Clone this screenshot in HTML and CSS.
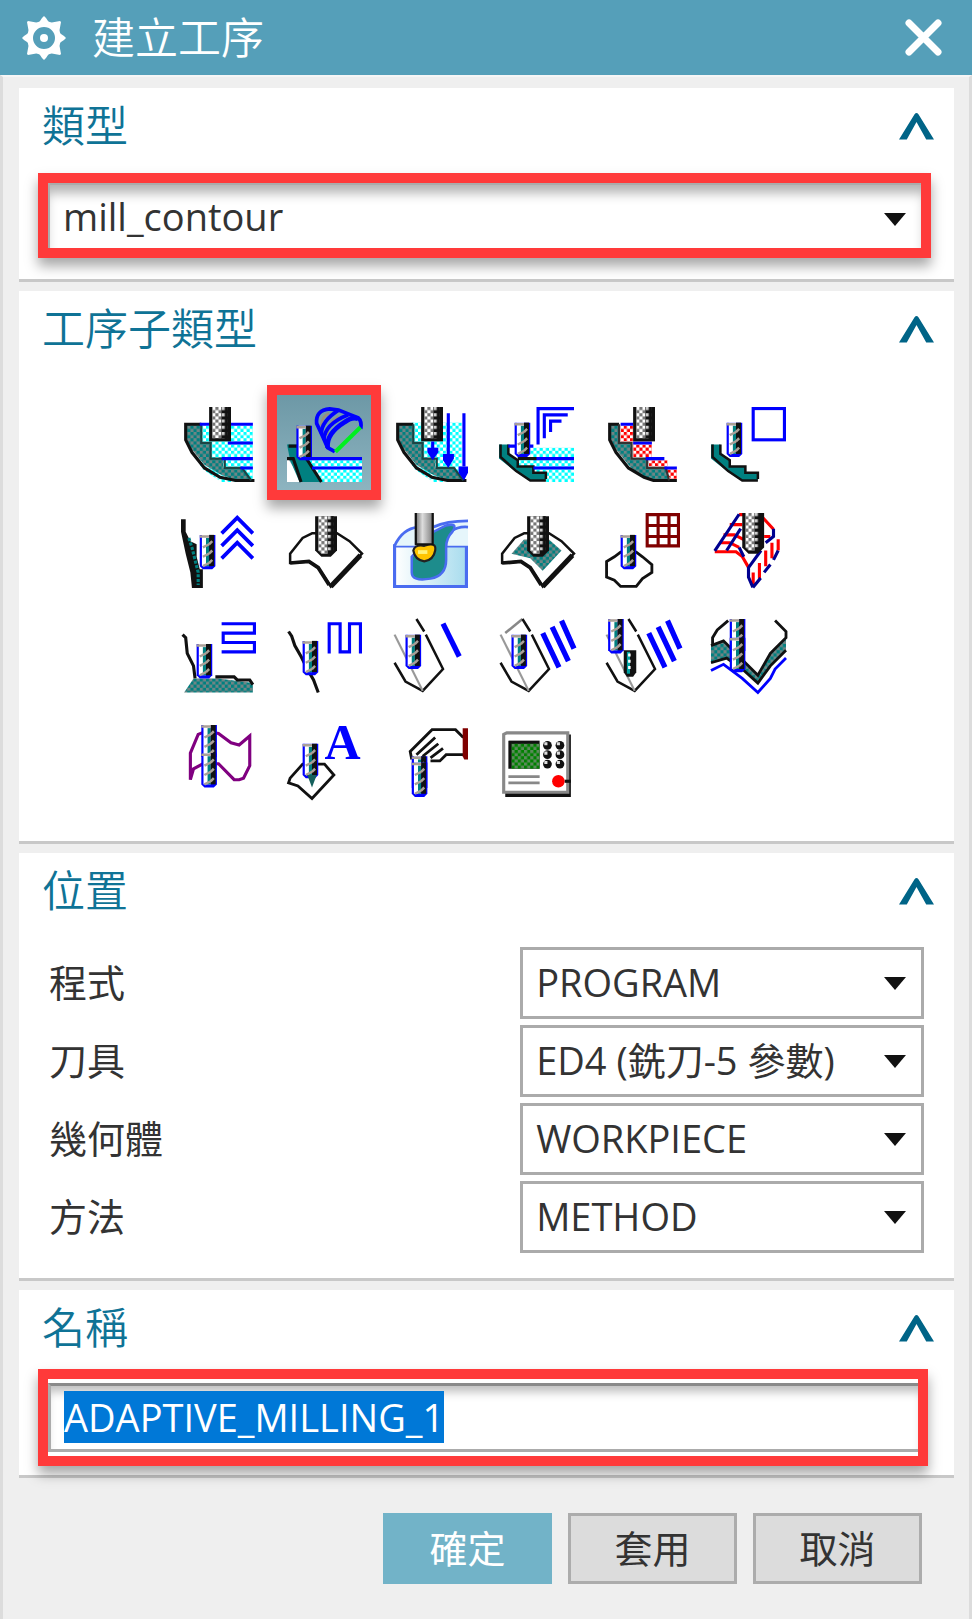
FILE: index.html
```
<!DOCTYPE html>
<html lang="zh-Hant">

<head>
    <meta charset="UTF-8">
    <meta name="viewport" content="width=device-width, initial-scale=1.0">
    <title>建立工序</title>
    <link rel="stylesheet" href="styles.css">
</head>

<body>
    <!-- shared patterns and cutters -->
    <svg class="defs" width="0" height="0" aria-hidden="true">
        <defs>
            <pattern id="teal" width="2" height="2" patternUnits="userSpaceOnUse">
                <rect width="2" height="2" fill="#008080" />
                <path d="M0 0h1v1h1v1h-1v-1h-1z" fill="#6f8585" />
            </pattern>
            <pattern id="cyan" width="2" height="2" patternUnits="userSpaceOnUse">
                <rect width="2" height="2" fill="#fff" />
                <path d="M0 0h1v1h1v1h-1v-1h-1z" fill="#00ffff" />
            </pattern>
            <pattern id="red" width="2" height="2" patternUnits="userSpaceOnUse">
                <rect width="2" height="2" fill="#fff" />
                <path d="M0 0h1v1h1v1h-1v-1h-1z" fill="#ff0000" />
            </pattern>
            <pattern id="green" width="2" height="2" patternUnits="userSpaceOnUse">
                <rect width="2" height="2" fill="#008000" />
                <path d="M0 0h1v1h1v1h-1v-1h-1z" fill="#5c8a5c" />
            </pattern>
            <pattern id="steel" width="2" height="2" patternUnits="userSpaceOnUse">
                <rect width="2" height="2" fill="#fff" />
                <path d="M0 0h1v1h1v1h-1v-1h-1z" fill="#777" />
            </pattern>
            <pattern id="dark" width="2" height="2" patternUnits="userSpaceOnUse">
                <rect width="2" height="2" fill="#111" />
                <path d="M0 0h1v1h-1z" fill="#ccc" />
            </pattern>
            <linearGradient id="shank">
                <stop offset="0" stop-color="#666" />
                <stop offset="0.4" stop-color="#ddd" />
                <stop offset="1" stop-color="#777" />
            </linearGradient>
            <linearGradient id="block">
                <stop offset="0" stop-color="#fff" />
                <stop offset="1" stop-color="#a8dcee" />
            </linearGradient>
            <g id="mill">
                <rect width="7" height="11" fill="#111" />
                <rect x="1" width="3" height="10" fill="url(#steel)" />
                <rect x="4" width="2" height="10" fill="url(#dark)" />
            </g>
            <g id="ball">
                <path d="M0 0h7v11l-2 2h-3l-2-2z" fill="#111" />
                <path d="M1 0h3v12h-2l-1-1z" fill="url(#steel)" />
                <rect x="4" width="2" height="11" fill="url(#dark)" />
            </g>
            <g id="cutter">
                <path d="M0 0h5v10l-1 1h-3l-1-1z" fill="#0000ff" />
                <rect x="0.700" width="2.300" height="10" fill="#fff" />
                <rect x="2" y="1" width="1" height="9" fill="#008080" />
                <rect x="3" y="0" width="1.600" height="10" fill="#111" />
                <path d="M0 .5h3M1 4l2-1M1 7l2-1M1 10l2-1M3 3l1-1M3 6l1-1M3 9l1-1" stroke="#aaa098" stroke-width="0.8" />
            </g>
            <g id="bowl">
                <path d="M1.500 5.500h5v6h3v5h4v3h6l3 4h-5l-5-2l-5-3l-4-5l-2-4z" fill="url(#teal)" />
                <path d="M6.500 5.500h-5v5l2 4l4 5l5 3l5 1h6" fill="none" stroke="#111" />
                <path d="M6.500 5.500v6h3v5h4.500v3h5.500l3 4" fill="none" stroke="#1c4444" stroke-width="0.7" />
            </g>
            <g id="sheet">
                <path d="M8 6.500L5 8L1 13v3l6-.5l3 2l4 6L24 13l-4-4l-4-2.500z" fill="#fff" stroke="#111" stroke-width="0.800" />
                <path d="M1 16l6-.500l3 2l3.500 5.500" fill="none" stroke="#111" stroke-width="1.200" />
                <path d="M14 23.500l9.500-10" stroke="#111" stroke-width="1.600" />
            </g>
            <g id="facet">
                <path d="M7.500 0L10 4M10.500 5L16 16L9.500 23L4 20L.5 14" fill="none" stroke="#111" stroke-width="0.800" />
                <path d="M.5 5l9 18" stroke="#999" stroke-width="0.700" />
            </g>
            <g id="corner">
                <path d="M0 12h3v3l3 2v2h5v2h4v2.500h-5l-5-3l-5-4z" fill="#008080" />
                <path d="M.5 12v4l5 4.500l4.500 3h5M3 12v3l3 2v2h5v2h4v2" fill="none" stroke="#111" stroke-width="0.800" />
            </g>
        </defs>
    </svg>

    <header class="titlebar">
        <svg class="gear" viewBox="0 0 44 44" aria-hidden="true">
            <g fill="#fff">
                <path d="M16 8l4-6l2-2l2 2l4 6zM16 36l4 6l2 2l2-2l4-6zM8 16l-6 4l-2 2l2 2l6 4zM36 16l6 4l2 2l-2 2l-6 4z" />
                <path d="M17 7l-11-2l-1 1l2 11zM27 7l11-2l1 1l-2 11zM17 37l-11 2l-1-1l2-11zM27 37l11 2l1-1l-2-11z" />
            </g>
            <circle cx="22" cy="22" r="14" fill="#559fb9" stroke="#fff" stroke-width="6" />
            <circle cx="22" cy="22" r="4" fill="#fff" />
        </svg>
        <h1>建立工序</h1>
        <button class="close" aria-label="關閉">
            <svg viewBox="0 0 37 37"><path d="M4 4L33 33M33 4L4 33" stroke="#fff" stroke-width="7" stroke-linecap="round" /></svg>
        </button>
    </header>

    <main>
        <section class="panel">
            <div class="panel-head">
                <h2><label for="type">類型</label></h2>
                <button class="fold" aria-label="收合類型"><svg viewBox="0 0 36 28"><path d="M0 28L16 2q2-3 4 0L36 28h-8L18 10L8 28z" /></svg></button>
            </div>
            <div class="marked type-box">
                <select id="type">
                    <option>mill_contour</option>
                </select>
            </div>
        </section>

        <section class="panel">
            <div class="panel-head">
                <h2>工序子類型</h2>
                <button class="fold" aria-label="收合工序子類型"><svg viewBox="0 0 36 28"><path d="M0 28L16 2q2-3 4 0L36 28h-8L18 10L8 28z" /></svg></button>
            </div>
            <div class="subtypes">
                <button aria-label="型腔銑">
                    <svg viewBox="0 0 24 24">
                        <rect x="6" y="6" width="17" height="18" fill="url(#cyan)" />
                        <path d="M1 11l6 9l6 4H1z" fill="#fff" />
                        <use href="#bowl" />
                        <path d="M6 5.500h17M15 11.500h8M13 16.500h10M19 19.500h4" stroke="#0000ff" />
                        <use href="#mill" x="9" y="0" />
                    </svg>
                </button>
                <button class="selected" aria-label="自適應銑削">
                    <svg viewBox="0 0 24 24">
                        <path d="M6 16h18v8H11z" fill="url(#cyan)" />
                        <path d="M0 16v8h5z" fill="#fff" />
                        <path d="M0 12h4l7 12H4L1 17z" fill="#008080" />
                        <path d="M.5 12.500h3M0 16.500h2l2.500 7.500M4 13l7 11" fill="none" stroke="#111" />
                        <path d="M6 16.500h18M8 19.500h16" stroke="#0000ff" />
                        <path d="M13.500 2Q11 3 11 6M16.500 3Q13 5 12.800 9" fill="none" stroke="#988e80" stroke-width="0.800" />
                        <g fill="none" stroke="#0000ff" stroke-width="1.200">
                            <path d="M15.300 14.300L13 13L11 8.500L9.500 5.300Q9 1 13.700 .6L16.500 1L19.600 2.200L22.800 3.500Q24 4.500 23.600 7" />
                            <path d="M11 8.500Q11 4.500 16.500 1" />
                            <path d="M11.800 10.500Q12 5.500 19.600 2.500" />
                            <path d="M13 13Q12.500 8.500 18.500 4.800Q21 3 22.800 3.800" stroke-width="1.500" />
                        </g>
                        <path d="M15.500 14.300L23.500 6.500" stroke="#00f020" stroke-width="1.300" />
                        <use href="#cutter" x="3" y="6" />
                    </svg>
                </button>
                <button aria-label="插銑">
                    <svg viewBox="0 0 24 24">
                        <rect x="6" y="5" width="16" height="19" fill="url(#cyan)" />
                        <path d="M1 11l6 9l6 4H1z" fill="#fff" />
                        <use href="#bowl" />
                        <use href="#mill" x="9" y="0" />
                        <path d="M12.700 11v3M17.700 2v14M22.700 2v17" stroke="#0000ff" />
                        <path d="M11 13h3.500v1.500L12.700 17L11 14.500zM16 15h3.500v1.500L17.700 19.500L16 17zM21 19h3v2l-1.300 2.500L21 21z" fill="#0000ff" />
                    </svg>
                </button>
                <button aria-label="拐角粗加工">
                    <svg viewBox="0 0 24 24">
                        <path d="M10 13h14v11h-9v-3h-4v-2H6v-3h4z" fill="url(#cyan)" />
                        <use href="#corner" />
                        <path d="M12.500 12V.5H24M14.500 10V2.500H22M16.500 8V4.500h3.500M11 16.500h13M11 19.500h13M3 12.500h8" fill="none" stroke="#0000ff" />
                        <use href="#cutter" x="5" y="5" />
                        <path d="M6 16.500h6" stroke="#111" />
                    </svg>
                </button>
                <button aria-label="剩餘銑">
                    <svg viewBox="0 0 24 24">
                        <path d="M5 6h4v5H5zM9 12h6v4H9zM14 17h6v2h-6zM19 20h4v3h-2z" fill="url(#red)" />
                        <path d="M1.500 5.500h3v6h4v5h5v3h6l1 4h-5l-5-2l-3-3l-4-5l-2-4z" fill="url(#teal)" />
                        <path d="M4.500 5.500h-3v5l2 4l4 5l5 3l3 1h7.500" fill="none" stroke="#111" />
                        <path d="M4.500 5.500v6h4v5h5v3h6l1 4" fill="none" stroke="#333" stroke-width="0.700" />
                        <path d="M5 5.500h4M9 11.500h6M13 16.500h6M19 19.500h4" stroke="#0000ff" />
                        <use href="#mill" x="9" y="0" />
                    </svg>
                </button>
                <button aria-label="深度輪廓銑">
                    <svg viewBox="0 0 24 24">
                        <use href="#corner" />
                        <rect x="13.500" y="0.500" width="10" height="10" fill="#fff" stroke="#0000ff" />
                        <use href="#cutter" x="5" y="5" />
                    </svg>
                </button>

                <button aria-label="陡峭深度銑">
                    <svg viewBox="0 0 24 24">
                        <path d="M0 2h1.500v4L3 9l2 1v4l1 4h1v6H3.500L3 19l-1.500-6L0 6z" fill="#111" />
                        <path d="M2.500 8l1 3l1 4l1 4v4" fill="none" stroke="#008080" stroke-dasharray="1 0.500" />
                        <path d="M13 6.500l5-5l5 5M13 10.500l5-5l5 5M13 14.500l5-5l5 5" fill="none" stroke="#0000ff" stroke-width="1.200" />
                        <use href="#cutter" x="6" y="7" />
                    </svg>
                </button>
                <button aria-label="固定輪廓銑">
                    <svg viewBox="0 0 24 24">
                        <use href="#sheet" />
                        <use href="#ball" x="9" y="1" />
                    </svg>
                </button>
                <button aria-label="區域輪廓銑">
                    <svg viewBox="0 0 24 24">
                        <path d="M.5 10.500h23v13H.5z" fill="url(#block)" stroke="#4a6cf0" />
                        <path d="M.5 10.500Q3 5 8 4.500L16 3h8v7.500z" fill="#e6f6fb" />
                        <path d="M.5 10.500Q3 5 8 4.500M13 4.500Q17 2.500 24 2.500M16 10Q18 4 24 4.500" fill="none" stroke="#4a6cf0" stroke-width="0.900" />
                        <path d="M13 6l4-2q4-1 2 2q-2 2-2 5v4q0 5-5 6q-6 1-6-2v-5z" fill="#1d8c8c" stroke="#4a6cf0" stroke-width="0.800" />
                        <path d="M6.500 12Q7 10 10 10.500Q14 9 13.500 12Q13 15 10 15.500Q7 15 6.500 12z" fill="#ffc400" stroke="#222" stroke-width="0.700" />
                        <path d="M8 12.500h3" stroke="#fff27a" stroke-width="1.200" />
                        <path d="M7 0h6v10H7z" fill="url(#shank)" />
                        <path d="M7.300 0v10h5.400V0" fill="none" stroke="#111" stroke-width="0.700" />
                    </svg>
                </button>
                <button aria-label="曲面區域銑">
                    <svg viewBox="0 0 24 24">
                        <use href="#sheet" />
                        <path d="M4 13l4-4.500h8l4 3.500l-6 6.500l-4-4z" fill="url(#teal)" />
                        <use href="#ball" x="9" y="1" />
                    </svg>
                </button>
                <button aria-label="流線">
                    <svg viewBox="0 0 24 24">
                        <path d="M5 12.500l-2 1.500l-2.500 1.500v5L3 21.500L5 23.500h5l2-2.500l3-2v-2.500L12 14l-2-1.500z" fill="#fff" stroke="#111" stroke-width="0.900" />
                        <path d="M13.500.5h10v10h-10zM17 .5v10M20.500.5v10M13.500 4h10M13.500 7.500h10" fill="none" stroke="#800000" />
                        <use href="#cutter" x="5" y="7" />
                    </svg>
                </button>
                <button aria-label="流線驅動">
                    <svg viewBox="0 0 24 24">
                        <g fill="none" stroke="#ff0000">
                            <path d="M9 .5h2M6 3.700h4M4 7h3.500l3 1.500M3 9.500h3l3 1.500M1.200 12.400H8l2 1.500l2 3.500" />
                            <path d="M16.600 1.500L20 5.200M17 7.500h2M21.500 8.400V12M19.500 9.500v5M17.500 12v5M15.500 16v5M13.500 19v4" />
                        </g>
                        <g fill="none" stroke="#000090">
                            <path d="M9 .4L1.200 12.100M9.500 5L5 12M9 11l1.500 3" />
                            <path d="M13.400 23.800l2.500-3M17 19l2-2.500M20 15l1.500-3M20 5v2.500l-2.500 2M16 12l-4 5.500v3l1.400 3.300" />
                        </g>
                        <use href="#ball" x="10" y="0" />
                    </svg>
                </button>

                <button aria-label="非陡峭區域銑">
                    <svg viewBox="0 0 24 24">
                        <path d="M1 23.500L4 19h8l11 1.500v3z" fill="url(#teal)" />
                        <path d="M.5 5l1 1l.5 5l2 4l.5 4M11 18.500h6l1 1h4l1 1.500" fill="none" stroke="#111" />
                        <path d="M13 1.500h10.500v3h-10v3h10v3H13" fill="none" stroke="#0000ff" />
                        <use href="#cutter" x="5" y="8" />
                    </svg>
                </button>
                <button aria-label="陡峭區域銑">
                    <svg viewBox="0 0 24 24">
                        <path d="M.5 4l1 1.500l1 3l2 3.500l2 4l2 3.500l1.500 4" fill="none" stroke="#111" />
                        <path d="M13.500 11V1.500H17v9h3v-9h3.500V11" fill="none" stroke="#0000ff" />
                        <use href="#cutter" x="5" y="7" />
                    </svg>
                </button>
                <button aria-label="單刀路清根">
                    <svg viewBox="0 0 24 24">
                        <use href="#facet" />
                        <path d="M16 1.500l5.200 10.500" stroke="#0000ff" stroke-width="1.700" />
                        <use href="#cutter" x="4" y="5" />
                    </svg>
                </button>
                <button aria-label="多刀路清根">
                    <svg viewBox="0 0 24 24">
                        <path d="M7.500 0L2 4.500" stroke="#888" stroke-width="0.800" />
                        <use href="#facet" />
                        <path d="M14 4.500l5.200 11M17 2.500l5.200 11M20 .5L24 9.500" stroke="#0000ff" stroke-width="1.700" />
                        <use href="#cutter" x="4" y="5" />
                    </svg>
                </button>
                <button aria-label="清根參考刀具">
                    <svg viewBox="0 0 24 24">
                        <use href="#facet" />
                        <path d="M14 4.500l5.200 11M17 2.500l5.200 11M20 .5L24 9.500" stroke="#0000ff" stroke-width="1.700" />
                        <use href="#cutter" x="1" y="0" />
                        <path d="M6 10h4v7l-1 1.500H7L6 17z" fill="#111" />
                        <path d="M7.500 10.500v7" stroke="#00a0a0" />
                        <path d="M7.800 11v6" stroke="#fff" stroke-width="0.800" stroke-dasharray="1 1" />
                    </svg>
                </button>
                <button aria-label="實體輪廓 3D">
                    <svg viewBox="0 0 24 24">
                        <path d="M0 8.500L4 7l6 6l5 5l4-7l5-5v4l-5 5l-4 5.500L10 16l-5-3.500L0 14z" fill="url(#teal)" />
                        <path d="M.5 8V6L2 3.500L5.500.5M0 8.500L4 7l6 6l5 5l4-7l5-5V4L20.500.5M0 14l5-1.500l5 3.500l5 4.500l4-5.500l5-5" fill="none" stroke="#111" stroke-width="0.900" />
                        <path d="M0 16.500l4-2l6 4.500l5 4.500l4-4.500l1.500-3l3.500-3.500" fill="none" stroke="#0000ff" stroke-width="0.900" />
                        <use href="#cutter" x="6" y="0" />
                        <use href="#cutter" x="6" y="6" />
                    </svg>
                </button>

                <button aria-label="輪廓 3D">
                    <svg viewBox="0 0 24 24">
                        <path d="M3 17.500V9l2.500-6L8 2l4 .7l4 3l2.600.7L22 3.500V13l-2 4l-1.400.5H17L12 12.400H7L4 14z" fill="#fff" stroke="#800080" />
                        <use href="#cutter" x="6.500" y="0" />
                        <use href="#cutter" x="6.500" y="9" />
                    </svg>
                </button>
                <button aria-label="輪廓文字">
                    <svg viewBox="0 0 24 24">
                        <path d="M5 12.500L1 17l-.5 1.500l3 1l4.500 4l7-7.500l-3-3.500z" fill="#fff" stroke="#111" stroke-width="0.900" />
                        <text class="glyph-a" x="12" y="11">A</text>
                        <use href="#cutter" x="5" y="6" />
                        <path d="M6.500 16h3l-1.500 4z" fill="#14605c" />
                    </svg>
                </button>
                <button aria-label="使用者定義銑">
                    <svg viewBox="0 0 24 24">
                        <path d="M5.500 10.500v-2L12.500 1.500H20L22.500 4v5H17l-2 2.500h-3.500z" fill="#fff" />
                        <path d="M6 11L5.500 8.500L12.500 1.500H20L22.500 4M22.500 9.500H17l-2 2h-3M7.500 9.500l6-5.500M9.500 10l5-4M12 10.500l4-3" fill="none" stroke="#111" stroke-width="0.900" />
                        <path d="M22.300 1h1.700v10h-1.200l-.5-1z" fill="#800000" />
                        <use href="#cutter" x="6" y="10" />
                        <use href="#cutter" x="6" y="12" />
                    </svg>
                </button>
                <button aria-label="銑削控制">
                    <svg viewBox="0 0 24 24">
                        <path d="M2 3h21v20H2z" fill="#111" />
                        <path d="M1.500 3l1-.5h19.500v19H1.500z" fill="#fff" stroke="#888" />
                        <path d="M3 5h10v9H3z" fill="#111" />
                        <path d="M4 6h9v8H4z" fill="url(#green)" />
                        <path d="M3 16.500h10M3 18.500h10" stroke="#888" stroke-width="0.900" />
                        <g fill="#111">
                            <circle cx="15.500" cy="6.500" r="1.400" />
                            <circle cx="19.500" cy="6.500" r="1.400" />
                            <circle cx="15.500" cy="9.500" r="1.400" />
                            <circle cx="19.500" cy="9.500" r="1.400" />
                            <circle cx="15.500" cy="12.500" r="1.400" />
                            <circle cx="19.500" cy="12.500" r="1.400" />
                        </g>
                        <path d="M14.500 6h1M14.500 9h1M14.500 12h1M18.500 6h1M18.500 9h1M18.500 12h1" stroke="#ddd" />
                        <path d="M21 18h2" stroke="#111" />
                        <circle cx="19" cy="18" r="2" fill="#ff0000" />
                    </svg>
                </button>
            </div>
        </section>

        <section class="panel">
            <div class="panel-head">
                <h2>位置</h2>
                <button class="fold" aria-label="收合位置"><svg viewBox="0 0 36 28"><path d="M0 28L16 2q2-3 4 0L36 28h-8L18 10L8 28z" /></svg></button>
            </div>
            <div class="fields">
                <label for="program">程式</label>
                <select id="program">
                    <option>PROGRAM</option>
                </select>
                <label for="tool">刀具</label>
                <select id="tool">
                    <option>ED4 (銑刀-5 參數)</option>
                </select>
                <label for="geometry">幾何體</label>
                <select id="geometry">
                    <option>WORKPIECE</option>
                </select>
                <label for="method">方法</label>
                <select id="method">
                    <option>METHOD</option>
                </select>
            </div>
        </section>

        <section class="panel">
            <div class="panel-head">
                <h2><label for="name">名稱</label></h2>
                <button class="fold" aria-label="收合名稱"><svg viewBox="0 0 36 28"><path d="M0 28L16 2q2-3 4 0L36 28h-8L18 10L8 28z" /></svg></button>
            </div>
            <div class="marked name-box">
                <input type="text" id="name" value="ADAPTIVE_MILLING_1">
            </div>
        </section>

        <div class="actions">
            <button class="ok">確定</button>
            <button>套用</button>
            <button>取消</button>
        </div>
    </main>

    <script>
        let nameBox = document.getElementById("name");
        nameBox.focus();
        nameBox.select();
    </script>
</body>

</html>
```
FILE: styles.css
```
* {
    box-sizing: border-box;
}

body {
    margin: 0;
    background: #efefef;
    color: #333;
    font-family: "Open Sans", "Noto Sans CJK TC", sans-serif;
    font-size: 38px;
}

button,
input,
select {
    font: inherit;
    color: inherit;
    border-radius: 0;
}

button {
    padding: 0;
    border: none;
    background: none;
    cursor: pointer;
}

svg {
    display: block;
}

.defs {
    position: absolute;
}

.titlebar {
    display: flex;
    align-items: center;
    height: 75px;
    padding: 0 30px 0 22px;
    background: #559fb9;
    color: #fff;
}

.gear {
    width: 44px;
    height: 44px;
}

h1,
h2 {
    margin: 0;
    padding-bottom: 6px;
    font-family: "Noto Sans CJK TC", sans-serif;
    font-size: 43px;
    font-weight: 350;
    line-height: 60px;
}

h1 {
    flex: 1;
    padding-left: 26px;
}

.close svg {
    width: 37px;
    height: 37px;
}

main {
    padding: 11px 15px 35px 16px;
    border: 3px solid #dcdcdc;
    border-top-color: #f6f6f6;
    border-top-width: 2px;
}

.panel {
    margin-bottom: 9px;
    background: #fff;
    border-bottom: 3px solid #c8c8c8;
}

.panel-head {
    display: flex;
    justify-content: space-between;
    align-items: center;
    height: 76px;
    padding: 0 20px 0 23px;
    color: #0f7396;
}

.fold svg {
    width: 35px;
    height: 28px;
    fill: #006487;
}

select {
    appearance: none;
    width: 100%;
    height: 72px;
    padding: 0 60px 2px 13px;
    border: 3px solid #ababab;
    background: #fff url("data:image/svg+xml,%3Csvg xmlns='http://www.w3.org/2000/svg' width='22' height='13'%3E%3Cpath d='M0 0h22L11 13z' fill='%23111'/%3E%3C/svg%3E") no-repeat right 15px center;
}

/* red call-out round a control */
.marked {
    border: 10px solid #ff3a3a;
    box-shadow: 0 8px 12px rgba(0, 0, 0, 0.35);
}

.type-box {
    margin: 9px 23px 21px 19px;
}

.type-box select {
    display: block;
    height: 65px;
    border-width: 2px 0 0 2px;
    background-position: right 15px top 28px;
    box-shadow: inset 0 12px 12px -4px rgba(0, 0, 0, 0.3);
}

.subtypes {
    display: grid;
    grid-template-columns: repeat(6, 106px);
    grid-auto-rows: 106px;
    padding: 24px 0 26px 146px;
}

.subtypes button {
    position: relative;
    display: flex;
    align-items: center;
    justify-content: center;
}

.subtypes svg {
    position: relative;
    z-index: 1;
    width: 75px;
    height: 75px;
    overflow: visible;
}

.subtypes .selected::before {
    content: "";
    position: absolute;
    inset: -6px -4px -3px -4px;
    border: 10px solid #ff3a3a;
    background: linear-gradient(#6d98a6, #8db4c0);
    box-shadow: 0 8px 12px rgba(0, 0, 0, 0.35);
}

.glyph-a {
    font-family: "Liberation Serif", serif;
    font-size: 16px;
    font-weight: bold;
    fill: #0000ff;
}

.fields {
    display: grid;
    grid-template-columns: 7fr 6fr;
    row-gap: 6px;
    align-items: center;
    padding: 18px 30px 25px;
}

.fields label {
    padding-bottom: 6px;
}

.name-box {
    margin: 3px 26px 9px 19px;
    padding: 4px 0;
}

.name-box input {
    display: block;
    width: 100%;
    height: 69px;
    padding: 0 13px 2px;
    border: 3px solid #ababab;
    border-right: none;
    border-top-color: #8a8a8a;
    background: #fff;
    box-shadow: inset 0 10px 10px -4px rgba(0, 0, 0, 0.25);
    outline: none;
}

.name-box input::selection {
    background: #0078d7;
    color: #fff;
}

.actions {
    display: flex;
    justify-content: flex-end;
    gap: 16px;
    padding: 26px 32px 0 0;
}

.actions button {
    width: 169px;
    height: 71px;
    padding-bottom: 4px;
    border: 3px solid #acacac;
    background: #dcdcdc;
}

.actions .ok {
    border-color: #72b3c8;
    background: #72b3c8;
    color: #fff;
}
```
